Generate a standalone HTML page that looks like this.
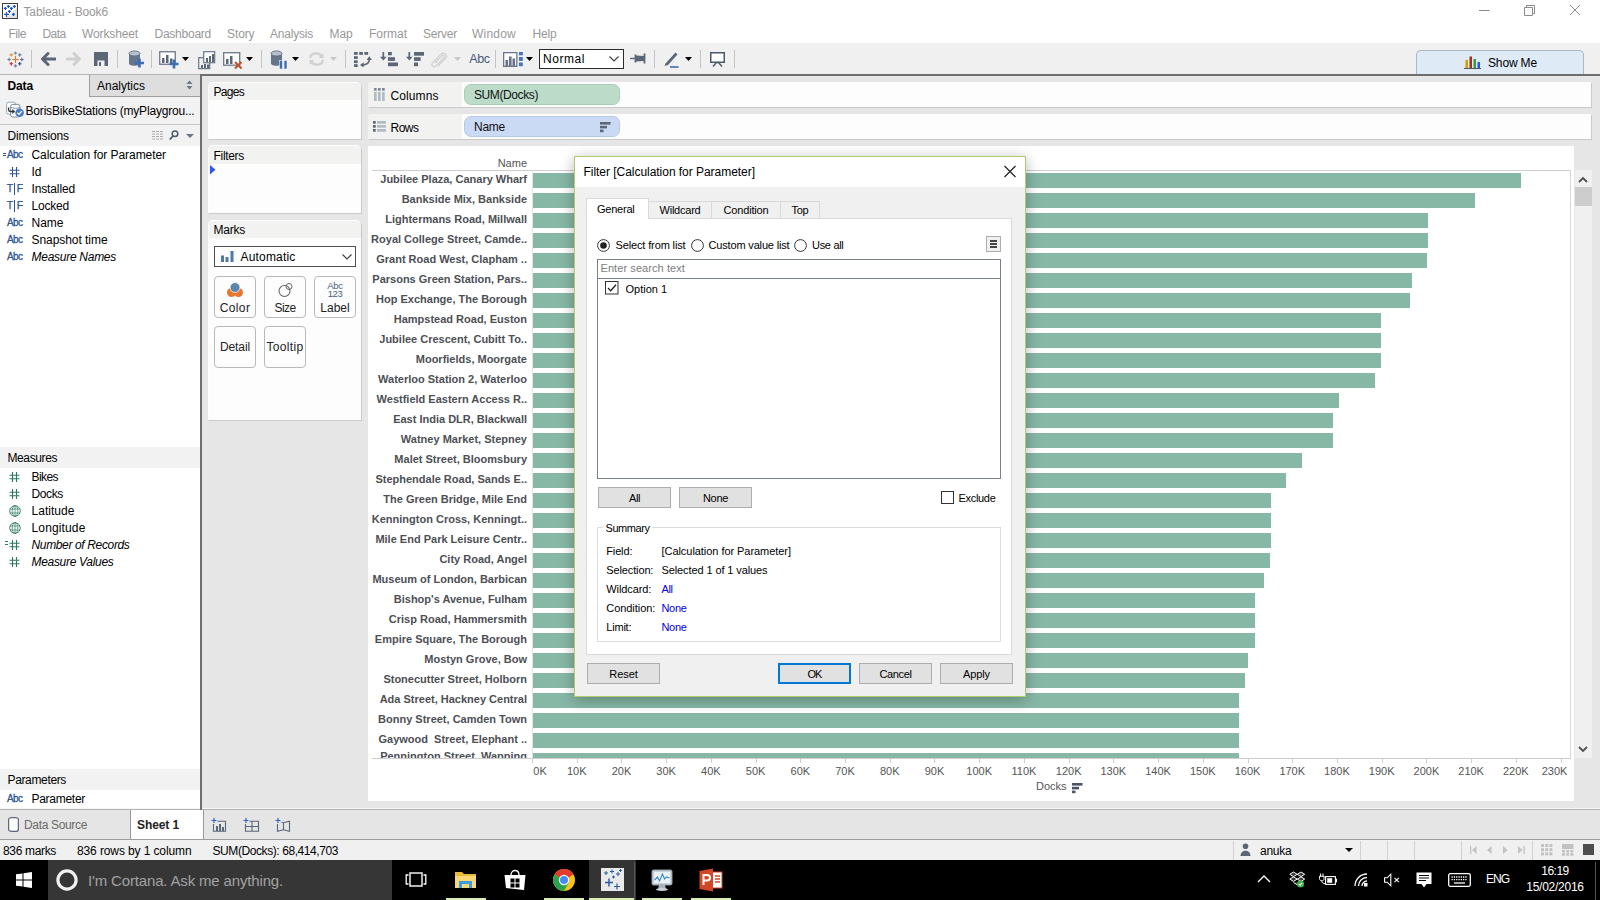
<!DOCTYPE html>
<html lang="en"><head><meta charset="utf-8"><title>Tableau - Book6</title><style>
html,body{margin:0;padding:0;}
body{width:1600px;height:900px;position:relative;overflow:hidden;background:#fff;font-family:'Liberation Sans',sans-serif;}
div,span,svg{position:absolute;box-sizing:border-box;}
span{white-space:pre;}
</style></head><body>
<svg style="left:2px;top:3px;" width="16" height="16" viewBox="0 0 16 16"><rect x="0.500" y="0.500" width="15" height="15" fill="#fff" stroke="#3c3c3c"/><path d="M15 5v10h-12z" fill="#e4e4e4"/><g stroke="#1a56b8" stroke-width="1.200"><path d="M1.900 5.400h3M3.400 3.900v3M4.900 3.400h3M6.400 1.900v3M7.900 5.400h3M9.400 3.900v3M10.900 3.400h3M12.400 1.900v3M5.900 8.400h3M7.400 6.900v3M2 11.400h5M4.500 9v5M10 11.400h3M11.500 9.900v3"/></g></svg>
<span style="left:23.50px;top:5.84px;font-size:12px;line-height:12px;color:#989898;letter-spacing:-0.149px;">Tableau - Book6</span>
<svg style="left:1476px;top:2px;" width="110" height="18" viewBox="0 0 110 18"><g stroke="#8a8a8a" stroke-width="1" fill="none"><path d="M3 8.5h10.5"/><path d="M48.5 5.5h8v8h-8z"/><path d="M50.5 5.5v-2h8v8h-2"/><path d="M94 3l10 10M104 3l-10 10"/></g></svg>
<span style="left:8.50px;top:28.14px;font-size:12px;line-height:12px;color:#989898;letter-spacing:-0.461px;">File</span>
<span style="left:42.50px;top:28.14px;font-size:12px;line-height:12px;color:#989898;letter-spacing:-0.590px;">Data</span>
<span style="left:82.00px;top:28.14px;font-size:12px;line-height:12px;color:#989898;letter-spacing:-0.127px;">Worksheet</span>
<span style="left:154.50px;top:28.14px;font-size:12px;line-height:12px;color:#989898;letter-spacing:-0.247px;">Dashboard</span>
<span style="left:227.00px;top:28.14px;font-size:12px;line-height:12px;color:#989898;letter-spacing:-0.103px;">Story</span>
<span style="left:270.00px;top:28.14px;font-size:12px;line-height:12px;color:#989898;letter-spacing:-0.211px;">Analysis</span>
<span style="left:329.50px;top:28.14px;font-size:12px;line-height:12px;color:#989898;letter-spacing:-0.115px;">Map</span>
<span style="left:369.00px;top:28.14px;font-size:12px;line-height:12px;color:#989898;">Format</span>
<span style="left:423.00px;top:28.14px;font-size:12px;line-height:12px;color:#989898;letter-spacing:-0.224px;">Server</span>
<span style="left:472.00px;top:28.14px;font-size:12px;line-height:12px;color:#989898;letter-spacing:0.219px;">Window</span>
<span style="left:532.50px;top:28.14px;font-size:12px;line-height:12px;color:#989898;letter-spacing:-0.172px;">Help</span>
<div style="left:0px;top:43px;width:1600px;height:32px;background:#f0f0f0;"></div>
<div style="left:0px;top:74px;width:200px;height:1px;background:#b2b2b2;"></div>
<div style="left:200px;top:74px;width:1400px;height:2px;background:#6e6e6e;"></div>
<div style="left:31px;top:50px;width:1px;height:18px;background:#c4c4c4;"></div>
<div style="left:117px;top:50px;width:1px;height:18px;background:#c4c4c4;"></div>
<div style="left:151px;top:50px;width:1px;height:18px;background:#c4c4c4;"></div>
<div style="left:261px;top:50px;width:1px;height:18px;background:#c4c4c4;"></div>
<div style="left:345px;top:50px;width:1px;height:18px;background:#c4c4c4;"></div>
<div style="left:495px;top:50px;width:1px;height:18px;background:#c4c4c4;"></div>
<div style="left:654px;top:50px;width:1px;height:18px;background:#c4c4c4;"></div>
<div style="left:700px;top:50px;width:1px;height:18px;background:#c4c4c4;"></div>
<div style="left:734px;top:50px;width:1px;height:18px;background:#c4c4c4;"></div>
<svg style="left:7px;top:50.5px;" width="17" height="17" viewBox="0 0 20 20"><g stroke-width="1.3" fill="none"><path d="M10 6v8M6 10h8" stroke="#e8762d" stroke-width="1.4"/><path d="M10 0.5v4M8 2.5h4" stroke="#7099a6"/><path d="M10 15.5v4M8 17.5h4" stroke="#7b7fa8"/><path d="M2.5 8v4M0.5 10h4" stroke="#5b879b"/><path d="M17.5 8v4M15.5 10h4" stroke="#5c6692"/><path d="M5 2.5v4M3 4.5h4" stroke="#eb9129"/><path d="M15 2.5v4M13 4.5h4" stroke="#59879b"/><path d="M5 13v4M3 15h4" stroke="#c72035"/><path d="M15 13v4M13 15h4" stroke="#1f447e"/></g></svg>
<svg style="left:40px;top:51px;" width="16" height="16" viewBox="0 0 16 16"><path d="M15 8H3.5M8 2.5L2.5 8l5.5 5.5" stroke="#5b6677" stroke-width="3" fill="none" stroke-linecap="round" stroke-linejoin="round"/></svg>
<svg style="left:66px;top:51px;" width="16" height="16" viewBox="0 0 16 16"><path d="M1 8h11.5M8 2.5L13.500 8l-5.5 5.5" stroke="#cfcfcf" stroke-width="3" fill="none" stroke-linecap="round" stroke-linejoin="round"/></svg>
<svg style="left:94px;top:52px;" width="14" height="14" viewBox="0 0 14 14"><rect x="0" y="0" width="14" height="14" fill="#5b6677"/><rect x="3.5" y="8.5" width="7" height="5.5" fill="#f0f0f0"/><rect x="5" y="10" width="2" height="4" fill="#5b6677"/></svg>
<svg style="left:128px;top:50px;" width="18" height="20" viewBox="0 0 18 20"><path d="M1 3.5v10c0 3 11 3 11 0v-10" fill="#66758a"/><ellipse cx="6.500" cy="3.500" rx="5.500" ry="2.500" fill="#b8c0cc" stroke="#66758a"/><path d="M11.500 8.500v9M7 13h9" stroke="#3e6db5" stroke-width="2.6"/></svg>
<svg style="left:159px;top:50px;" width="20" height="20" viewBox="0 0 20 20"><rect x="0.750" y="1.750" width="15.500" height="12.500" fill="#fff" stroke="#6b778a" stroke-width="1.3"/><rect x="3" y="8" width="2.500" height="5" fill="#5b6677"/><rect x="7" y="5" width="2.500" height="8" fill="#5b6677"/><rect x="11" y="8.500" width="2.500" height="4.500" fill="#5b6677"/><path d="M15 9.500v9M10.500 14h9" stroke="#3e6db5" stroke-width="2.600"/></svg>
<svg style="left:182px;top:57px;" width="7" height="4" viewBox="0 0 7 4"><path d="M0 0h7l-3.5 4z" fill="#000"/></svg>
<svg style="left:198px;top:50px;" width="20" height="20" viewBox="0 0 20 20"><rect x="5.700" y="1.700" width="11" height="11" fill="#fff" stroke="#6b778a" stroke-width="1.2"/><rect x="8" y="8" width="2" height="4" fill="#5b6677"/><rect x="11" y="6" width="2" height="6" fill="#5b6677"/><rect x="14" y="4" width="2" height="8" fill="#5b6677"/><path d="M5.500 7.600h-4.800v11h11v-5.500" fill="none" stroke="#6b778a" stroke-width="1.2"/><rect x="3" y="15" width="2" height="3" fill="#5b6677"/><rect x="6" y="14" width="2" height="4" fill="#5b6677"/><rect x="9" y="14.500" width="2" height="3.500" fill="#5b6677"/></svg>
<svg style="left:223px;top:50px;" width="20" height="20" viewBox="0 0 20 20"><rect x="0.700" y="2.700" width="16" height="12.500" fill="#fff" stroke="#6b778a" stroke-width="1.3"/><rect x="3" y="9" width="2.500" height="5" fill="#5b6677"/><rect x="7" y="6" width="2.500" height="8" fill="#5b6677"/><path d="M12 12l6.500 6.500M18.500 12L12 18.500" stroke="#c0502a" stroke-width="2"/></svg>
<svg style="left:246px;top:57px;" width="7" height="4" viewBox="0 0 7 4"><path d="M0 0h7l-3.5 4z" fill="#000"/></svg>
<svg style="left:270px;top:50px;" width="18" height="20" viewBox="0 0 18 20"><path d="M1 3.500v10c0 3 11 3 11 0v-10" fill="#66758a"/><ellipse cx="6.500" cy="3.500" rx="5.500" ry="2.500" fill="#b8c0cc" stroke="#66758a"/><rect x="9.500" y="10.500" width="3" height="8.500" fill="#3e6db5" stroke="#f0f0f0" stroke-width="0.600"/><rect x="14" y="10.500" width="3" height="8.500" fill="#3e6db5" stroke="#f0f0f0" stroke-width="0.600"/></svg>
<svg style="left:292px;top:57px;" width="7" height="4" viewBox="0 0 7 4"><path d="M0 0h7l-3.5 4z" fill="#000"/></svg>
<svg style="left:308px;top:51px;" width="17" height="16" viewBox="0 0 17 16"><g fill="none" stroke="#d0d0d0" stroke-width="2.200"><path d="M2 7c1-6 10-6 12-1"/><path d="M15 9c-1 6-10 6-12 1"/></g><path d="M15.500 2v5h-5z" fill="#d0d0d0"/><path d="M1.500 14v-5h5z" fill="#d0d0d0"/></svg>
<svg style="left:330px;top:57px;" width="7" height="4" viewBox="0 0 7 4"><path d="M0 0h7l-3.5 4z" fill="#c8c8c8"/></svg>
<svg style="left:354px;top:52px;" width="18" height="15" viewBox="0 0 18 15"><g fill="#5b6677"><rect x="0" y="0" width="3.700" height="2.800"/><rect x="5.200" y="0" width="3.700" height="2.800"/><rect x="10.400" y="0" width="3.700" height="2.800"/><rect x="0" y="4.200" width="3.700" height="2.800"/><rect x="0" y="8.300" width="3.700" height="2.800"/><rect x="0" y="12.200" width="3.700" height="2.800"/></g><path d="M8 13c5.500 0 7.300-2 7.300-6" fill="none" stroke="#5b6677" stroke-width="1.600"/><path d="M12.600 8l2.700-3.800 2.700 3.800z" fill="#5b6677"/><path d="M9.700 10.300l-3.700 2.700 3.700 2.700z" fill="#5b6677"/></svg>
<svg style="left:380px;top:52px;" width="18" height="15" viewBox="0 0 18 15"><path d="M3.300 0v7" stroke="#5b6677" stroke-width="1.700"/><path d="M0 4.800h6.600l-3.300 3.700z" fill="#5b6677"/><g fill="#5b6677"><rect x="8" y="0" width="3.800" height="3.300"/><rect x="8" y="5.200" width="7" height="3.700"/><rect x="8" y="10.500" width="10" height="3.700"/></g></svg>
<svg style="left:406px;top:52px;" width="18" height="15" viewBox="0 0 18 15"><path d="M3.300 0v7" stroke="#5b6677" stroke-width="1.700"/><path d="M0 4.800h6.600l-3.300 3.700z" fill="#5b6677"/><g fill="#5b6677"><rect x="8" y="0" width="10" height="3.700"/><rect x="8" y="5.200" width="6.600" height="3.700"/><rect x="8" y="10.500" width="4" height="3.700"/></g></svg>
<svg style="left:430px;top:51px;" width="18" height="17" viewBox="0 0 18 17"><path d="M5 12l7-7.300c1.300-1.300 3.200 0.500 1.900 1.900l-8 8.300c-2.300 2.300-5.500-0.800-3.200-3.200l8.300-8.500c3-3 7.300 1.200 4.300 4.300l-7.600 7.800" fill="none" stroke="#cfcfcf" stroke-width="1.200"/></svg>
<svg style="left:454px;top:57px;" width="7" height="4" viewBox="0 0 7 4"><path d="M0 0h7l-3.5 4z" fill="#c8c8c8"/></svg>
<span style="left:469.30px;top:53.12px;font-size:12.5px;line-height:12.5px;color:#4a5a78;letter-spacing:-0.416px;">Abc</span>
<svg style="left:503px;top:52px;" width="20" height="15" viewBox="0 0 20 15"><rect x="0.650" y="0.650" width="13.200" height="13.700" fill="#fff" stroke="#6b778a" stroke-width="1.300"/><rect x="2.500" y="8" width="2.600" height="6" fill="#66738a"/><rect x="6" y="4.500" width="2.600" height="9.500" fill="#66738a"/><rect x="9.500" y="6.500" width="2.600" height="7.500" fill="#66738a"/><rect x="16" y="0" width="3.800" height="3.300" fill="#4472c4"/><rect x="16" y="5" width="3.800" height="3.900" fill="#4472c4"/><rect x="16" y="10.500" width="3.800" height="3.700" fill="#4472c4"/></svg>
<svg style="left:526px;top:57px;" width="7" height="4" viewBox="0 0 7 4"><path d="M0 0h7l-3.5 4z" fill="#000"/></svg>
<div style="left:539px;top:49px;width:85px;height:20px;background:#fff;border:1px solid #2b2b2b;"></div>
<span style="left:543.00px;top:52.84px;font-size:12px;line-height:12px;color:#000;letter-spacing:0.555px;">Normal</span>
<svg style="left:609px;top:56px;" width="10" height="6" viewBox="0 0 10 6"><path d="M0.500 0.500l4.500 4.500 4.500-4.500" fill="none" stroke="#444" stroke-width="1.200"/></svg>
<svg style="left:630px;top:53px;" width="16" height="11" viewBox="0 0 16 11"><path d="M0 5.500h6" stroke="#5b6677" stroke-width="1.400"/><path d="M5.500 1.500v8M14.500 0.500v10" stroke="#5b6677" stroke-width="1.800"/><path d="M6 2.500l8 0.500v5l-8 0.500z" fill="#5b6677"/></svg>
<svg style="left:663px;top:51px;" width="17" height="17" viewBox="0 0 17 17"><path d="M2.500 12.500l10-11 2 2-9.500 10.500-3.500 1z" fill="#5b6677"/><path d="M7 16h8.500" stroke="#3e6db5" stroke-width="1.600"/></svg>
<svg style="left:685px;top:57px;" width="7" height="4" viewBox="0 0 7 4"><path d="M0 0h7l-3.5 4z" fill="#000"/></svg>
<svg style="left:710px;top:52px;" width="15" height="15" viewBox="0 0 15 15"><rect x="0.750" y="0.750" width="13.500" height="9.500" fill="#fff" stroke="#4d596b" stroke-width="1.500"/><path d="M3 14.500l3.500-4h2l3.500 4" fill="none" stroke="#4d596b" stroke-width="1.400"/></svg>
<div style="left:1416px;top:50px;width:168px;height:24px;background:#deeaf6;border:1px solid #a9b6c4;border-bottom:none;border-radius:5px 5px 0 0;"></div>
<svg style="left:1464px;top:56px;" width="17" height="13" viewBox="0 0 17 13"><rect x="1.500" y="4" width="2.500" height="8" fill="#c8a000"/><rect x="5.500" y="0.500" width="2.500" height="11.500" fill="#a03020"/><rect x="9.500" y="3" width="2.500" height="9" fill="#30a040"/><rect x="13.500" y="6" width="2.500" height="6" fill="#3050f0"/><path d="M0 12.500h17" stroke="#555" stroke-width="1"/></svg>
<span style="left:1488.00px;top:56.84px;font-size:12px;line-height:12px;color:#000;letter-spacing:-0.147px;">Show Me</span>
<div style="left:202px;top:76px;width:1398px;height:734px;background:#e6e6e6;"></div>
<div style="left:0px;top:75px;width:200px;height:22px;background:#f2f2f2;"></div>
<div style="left:89px;top:75px;width:111px;height:22px;background:#dedede;border-left:1px solid #9e9e9e;border-bottom:1px solid #9e9e9e;"></div>
<span style="left:7.50px;top:80.14px;font-size:12px;line-height:12px;color:#000;font-weight:bold;letter-spacing:-0.129px;">Data</span>
<span style="left:97.00px;top:80.14px;font-size:12px;line-height:12px;color:#000;">Analytics</span>
<svg style="left:186px;top:80px;" width="7" height="10" viewBox="0 0 7 10"><path d="M0.500 4l3-3.500 3 3.500z" fill="#6b7686"/><path d="M0.500 6l3 3.500 3-3.500z" fill="#6b7686"/></svg>
<div style="left:0px;top:97px;width:200px;height:27px;background:#f2f2f2;"></div>
<svg style="left:6px;top:101px;" width="19" height="17" viewBox="0 0 19 17"><rect x="0.600" y="1.200" width="9" height="12" rx="2" fill="#fdfdfd" stroke="#9aa5b4" stroke-width="1"/><rect x="4.600" y="3.400" width="9.400" height="12.600" rx="2.200" fill="#fdfdfd" stroke="#7f8b9c" stroke-width="1"/><path d="M5 6.300c2 1.300 7 1.300 8.800 0" fill="none" stroke="#7f8b9c" stroke-width="0.900"/><path d="M2.600 6.500v2.300c0 1.200 0.500 1.700 1.700 1.700h4" fill="none" stroke="#333" stroke-width="1.300"/><path d="M6.300 8l2.700 2.500-2.700 2.500z" fill="#333"/><circle cx="13.600" cy="11.700" r="4.300" fill="#4a7cc4"/><path d="M11.400 11.800l1.600 1.600 2.800-3.300" stroke="#fff" stroke-width="1.300" fill="none"/></svg>
<span style="left:25.50px;top:104.64px;font-size:12px;line-height:12px;color:#000;letter-spacing:-0.179px;">BorisBikeStations (myPlaygrou...</span>
<div style="left:0px;top:124px;width:200px;height:1px;background:#c6c6c6;"></div>
<div style="left:0px;top:125px;width:200px;height:21px;background:#f2f2f2;"></div>
<span style="left:7.50px;top:130.14px;font-size:12px;line-height:12px;color:#000;letter-spacing:-0.120px;">Dimensions</span>
<svg style="left:152px;top:131px;" width="12" height="9" viewBox="0 0 12 9"><g stroke="#aaa" stroke-width="1" stroke-dasharray="3 1"><path d="M0 0.500h12M0 3h12M0 5.500h12M0 8h12"/></g></svg>
<svg style="left:169px;top:130px;" width="10" height="10" viewBox="0 0 10 10"><circle cx="6" cy="3.800" r="2.800" fill="none" stroke="#4d5868" stroke-width="1.500"/><path d="M4 6l-3.200 3.500" stroke="#4d5868" stroke-width="1.800"/></svg>
<svg style="left:186px;top:134px;" width="8" height="4" viewBox="0 0 8 4"><path d="M0 0h8l-4 4z" fill="#6b7686"/></svg>
<span style="left:31.50px;top:149.14px;font-size:12px;line-height:12px;color:#000;letter-spacing:-0.062px;">Calculation for Parameter</span>
<span style="left:7.00px;top:149.53px;font-size:10px;line-height:10px;color:#2f5597;letter-spacing:-0.578px;-webkit-text-stroke:0.300px #2f5597;">Abc</span>
<div style="left:2.7px;top:153px;width:3.5px;height:1px;background:#2f5597;"></div>
<div style="left:2.7px;top:155px;width:3.5px;height:1px;background:#2f5597;"></div>
<span style="left:31.50px;top:166.14px;font-size:12px;line-height:12px;color:#000;letter-spacing:-0.008px;">Id</span>
<svg style="left:8.5px;top:166.5px;" width="11" height="10" viewBox="0 0 11 10"><g stroke="#2f5597" stroke-width="1.100"><path d="M3.500 0v10M7.500 0v10M0.500 3.300h10M0.500 6.800h10"/></g></svg>
<span style="left:31.50px;top:183.14px;font-size:12px;line-height:12px;color:#000;letter-spacing:-0.134px;">Installed</span>
<span style="left:6.80px;top:183.11px;font-size:10.5px;line-height:10.5px;color:#2f5597;-webkit-text-stroke:0.250px #2f5597;">T</span>
<div style="left:13.5px;top:183px;width:1px;height:12px;background:#2f5597;"></div>
<span style="left:16.80px;top:183.11px;font-size:10.5px;line-height:10.5px;color:#2f5597;-webkit-text-stroke:0.250px #2f5597;">F</span>
<span style="left:31.50px;top:200.14px;font-size:12px;line-height:12px;color:#000;letter-spacing:-0.201px;">Locked</span>
<span style="left:6.80px;top:200.11px;font-size:10.5px;line-height:10.5px;color:#2f5597;-webkit-text-stroke:0.250px #2f5597;">T</span>
<div style="left:13.5px;top:200px;width:1px;height:12px;background:#2f5597;"></div>
<span style="left:16.80px;top:200.11px;font-size:10.5px;line-height:10.5px;color:#2f5597;-webkit-text-stroke:0.250px #2f5597;">F</span>
<span style="left:31.50px;top:217.14px;font-size:12px;line-height:12px;color:#000;">Name</span>
<span style="left:7.00px;top:217.53px;font-size:10px;line-height:10px;color:#2f5597;letter-spacing:-0.578px;-webkit-text-stroke:0.300px #2f5597;">Abc</span>
<span style="left:31.50px;top:234.14px;font-size:12px;line-height:12px;color:#000;letter-spacing:-0.055px;">Snapshot time</span>
<span style="left:7.00px;top:234.53px;font-size:10px;line-height:10px;color:#2f5597;letter-spacing:-0.578px;-webkit-text-stroke:0.300px #2f5597;">Abc</span>
<span style="left:31.50px;top:251.14px;font-size:12px;line-height:12px;color:#000;font-style:italic;letter-spacing:-0.272px;">Measure Names</span>
<span style="left:7.00px;top:251.53px;font-size:10px;line-height:10px;color:#2f5597;letter-spacing:-0.578px;-webkit-text-stroke:0.300px #2f5597;">Abc</span>
<div style="left:0px;top:447px;width:200px;height:21px;background:#f2f2f2;"></div>
<span style="left:7.50px;top:452.14px;font-size:12px;line-height:12px;color:#000;letter-spacing:-0.398px;">Measures</span>
<span style="left:31.50px;top:471.14px;font-size:12px;line-height:12px;color:#000;letter-spacing:-0.569px;">Bikes</span>
<svg style="left:8.5px;top:471.5px;" width="11" height="10" viewBox="0 0 11 10"><g stroke="#2c7a5c" stroke-width="1.100"><path d="M3.500 0v10M7.500 0v10M0.500 3.300h10M0.500 6.800h10"/></g></svg>
<span style="left:31.50px;top:488.14px;font-size:12px;line-height:12px;color:#000;letter-spacing:-0.369px;">Docks</span>
<svg style="left:8.5px;top:488.5px;" width="11" height="10" viewBox="0 0 11 10"><g stroke="#2c7a5c" stroke-width="1.100"><path d="M3.500 0v10M7.500 0v10M0.500 3.300h10M0.500 6.800h10"/></g></svg>
<span style="left:31.50px;top:505.14px;font-size:12px;line-height:12px;color:#000;letter-spacing:0.037px;">Latitude</span>
<svg style="left:8.5px;top:505.0px;" width="12" height="12" viewBox="0 0 12 12"><g fill="none" stroke="#2c7a5c" stroke-width="0.900"><circle cx="6" cy="6" r="5.300"/><ellipse cx="6" cy="6" rx="2.800" ry="5.300" stroke-width="0.700"/><path d="M6 0.700v10.600M1.200 4h9.600M1.200 8h9.600" stroke-width="0.700"/></g></svg>
<span style="left:31.50px;top:522.14px;font-size:12px;line-height:12px;color:#000;letter-spacing:0.142px;">Longitude</span>
<svg style="left:8.5px;top:522.0px;" width="12" height="12" viewBox="0 0 12 12"><g fill="none" stroke="#2c7a5c" stroke-width="0.900"><circle cx="6" cy="6" r="5.300"/><ellipse cx="6" cy="6" rx="2.800" ry="5.300" stroke-width="0.700"/><path d="M6 0.700v10.600M1.200 4h9.600M1.200 8h9.600" stroke-width="0.700"/></g></svg>
<span style="left:31.50px;top:539.14px;font-size:12px;line-height:12px;color:#000;font-style:italic;letter-spacing:-0.356px;">Number of Records</span>
<svg style="left:8.5px;top:539.5px;" width="11" height="10" viewBox="0 0 11 10"><g stroke="#2c7a5c" stroke-width="1.100"><path d="M3.500 0v10M7.500 0v10M0.500 3.300h10M0.500 6.800h10"/></g></svg>
<div style="left:5px;top:541px;width:3px;height:1px;background:#2c7a5c;"></div>
<div style="left:5px;top:544px;width:3px;height:1px;background:#2c7a5c;"></div>
<span style="left:31.50px;top:556.14px;font-size:12px;line-height:12px;color:#000;font-style:italic;letter-spacing:-0.306px;">Measure Values</span>
<svg style="left:8.5px;top:556.5px;" width="11" height="10" viewBox="0 0 11 10"><g stroke="#2c7a5c" stroke-width="1.100"><path d="M3.500 0v10M7.500 0v10M0.500 3.300h10M0.500 6.800h10"/></g></svg>
<div style="left:0px;top:769px;width:200px;height:21px;background:#f2f2f2;"></div>
<span style="left:7.50px;top:774.14px;font-size:12px;line-height:12px;color:#000;letter-spacing:-0.353px;">Parameters</span>
<span style="left:7.00px;top:794.03px;font-size:10px;line-height:10px;color:#2f5597;letter-spacing:-0.578px;-webkit-text-stroke:0.300px #2f5597;">Abc</span>
<span style="left:31.50px;top:793.14px;font-size:12px;line-height:12px;color:#000;letter-spacing:-0.281px;">Parameter</span>
<div style="left:200px;top:75px;width:2px;height:735px;background:#707070;"></div>
<div style="left:208px;top:82px;width:153px;height:57px;background:#fdfdfd;border-radius:5px 5px 0 0;box-shadow:1px 1px 0 #c9c9c9;overflow:hidden;border-top:1px solid #fff;border-left:1px solid #fff;"><div style="left:0;top:0;width:153px;height:17px;background:#f2f2f1"></div></div>
<span style="left:213.50px;top:85.84px;font-size:12px;line-height:12px;color:#000;letter-spacing:-0.706px;">Pages</span>
<div style="left:208px;top:145px;width:153px;height:68px;background:#fdfdfd;border-radius:5px 5px 0 0;box-shadow:1px 1px 0 #c9c9c9;overflow:hidden;border-top:1px solid #fff;border-left:1px solid #fff;"><div style="left:0;top:0;width:153px;height:18px;background:#f2f2f1"></div></div>
<span style="left:213.50px;top:149.59px;font-size:12px;line-height:12px;color:#000;letter-spacing:-0.310px;">Filters</span>
<svg style="left:210px;top:165px;" width="6" height="10" viewBox="0 0 6 10"><path d="M0 0l5.500 4.700-5.500 4.700z" fill="#2f55f5"/></svg>
<div style="left:208px;top:220px;width:153px;height:200px;background:#fdfdfd;border-radius:5px 5px 0 0;box-shadow:1px 1px 0 #c9c9c9;overflow:hidden;border-top:1px solid #fff;border-left:1px solid #fff;"><div style="left:0;top:0;width:153px;height:17px;background:#f2f2f1"></div></div>
<span style="left:213.50px;top:223.84px;font-size:12px;line-height:12px;color:#000;letter-spacing:-0.234px;">Marks</span>
<div style="left:214px;top:246px;width:142px;height:21px;background:#fff;border:1px solid #4f4f4f;"></div>
<svg style="left:221px;top:251px;" width="13" height="11" viewBox="0 0 13 11"><rect x="0" y="4.500" width="3" height="6.500" fill="#4e79a7"/><rect x="4.500" y="6" width="3" height="5" fill="#4e79a7"/><rect x="9.500" y="0" width="3" height="11" fill="#4e79a7"/></svg>
<span style="left:240.50px;top:250.84px;font-size:12px;line-height:12px;color:#000;letter-spacing:0.182px;">Automatic</span>
<svg style="left:342px;top:254px;" width="10" height="6" viewBox="0 0 10 6"><path d="M0.500 0.500l4.500 4.500 4.500-4.500" fill="none" stroke="#444" stroke-width="1.200"/></svg>
<div style="left:214px;top:276px;width:42px;height:42px;background:#fdfdfd;border:1px solid #b9b9b9;border-radius:4px;"></div>
<span style="left:219.75px;top:301.84px;font-size:12px;line-height:12px;color:#222;letter-spacing:0.362px;">Color</span>
<div style="left:264px;top:276px;width:42px;height:42px;background:#fdfdfd;border:1px solid #b9b9b9;border-radius:4px;"></div>
<span style="left:274.50px;top:301.84px;font-size:12px;line-height:12px;color:#222;letter-spacing:-0.586px;">Size</span>
<div style="left:314px;top:276px;width:42px;height:42px;background:#fdfdfd;border:1px solid #b9b9b9;border-radius:4px;"></div>
<span style="left:320.25px;top:301.84px;font-size:12px;line-height:12px;color:#222;letter-spacing:0.025px;">Label</span>
<div style="left:214px;top:326px;width:42px;height:42px;background:#fdfdfd;border:1px solid #b9b9b9;border-radius:4px;"></div>
<span style="left:220.00px;top:341.34px;font-size:12px;line-height:12px;color:#222;letter-spacing:-0.115px;">Detail</span>
<div style="left:264px;top:326px;width:42px;height:42px;background:#fdfdfd;border:1px solid #b9b9b9;border-radius:4px;"></div>
<span style="left:266.50px;top:341.34px;font-size:12px;line-height:12px;color:#222;letter-spacing:0.330px;">Tooltip</span>
<svg style="left:226px;top:282px;" width="18" height="16" viewBox="0 0 18 16"><circle cx="5.500" cy="10.500" r="4.500" fill="#e8762d"/><circle cx="12.500" cy="10.500" r="4.500" fill="#e8762d"/><circle cx="9" cy="5.500" r="5" fill="#5b87ad" stroke="#fdfdfd" stroke-width="0.800"/></svg>
<svg style="left:278px;top:282px;" width="16" height="16" viewBox="0 0 16 16"><circle cx="6.500" cy="9" r="5.500" fill="none" stroke="#666" stroke-width="1.100"/><circle cx="11" cy="4.500" r="3" fill="none" stroke="#666" stroke-width="1"/></svg>
<span style="left:327.25px;top:281.46px;font-size:9.5px;line-height:9.5px;color:#4d5d78;letter-spacing:-0.292px;">Abc</span>
<span style="left:327.75px;top:289.46px;font-size:9.5px;line-height:9.5px;color:#4d5d78;letter-spacing:-0.453px;">123</span>
<div style="left:368px;top:82px;width:1223px;height:25px;background:#fdfdfd;border-radius:4px 0 0 0;box-shadow:1px 1px 0 #c9c9c9;overflow:hidden;"><div style="left:0;top:0;width:94px;height:25px;background:#f2f2f1"></div></div>
<span style="left:390.50px;top:89.84px;font-size:12px;line-height:12px;color:#000;letter-spacing:0.092px;">Columns</span>
<div style="left:368px;top:114px;width:1223px;height:25px;background:#fdfdfd;border-radius:4px 0 0 0;box-shadow:1px 1px 0 #c9c9c9;overflow:hidden;"><div style="left:0;top:0;width:94px;height:25px;background:#f2f2f1"></div></div>
<span style="left:390.50px;top:121.84px;font-size:12px;line-height:12px;color:#000;letter-spacing:-0.504px;">Rows</span>
<svg style="left:374px;top:88px;" width="11" height="13" viewBox="0 0 11 13"><g fill="#7d8797"><rect x="0" y="0" width="2.700" height="2.700"/><rect x="4" y="0" width="2.700" height="2.700"/><rect x="8" y="0" width="2.700" height="2.700"/></g><g fill="#b4bac4"><rect x="0" y="4" width="2.700" height="9"/><rect x="4" y="4" width="2.700" height="9"/><rect x="8" y="4" width="2.700" height="9"/></g></svg>
<svg style="left:373px;top:121px;" width="13" height="11" viewBox="0 0 13 11"><g fill="#5b6677"><rect x="0" y="0" width="2.700" height="2.700"/><rect x="0" y="4" width="2.700" height="2.700"/><rect x="0" y="8" width="2.700" height="2.700"/></g><g fill="#b4bac4"><rect x="4" y="0" width="9" height="2.700"/><rect x="4" y="4" width="9" height="2.700"/><rect x="4" y="8" width="9" height="2.700"/></g></svg>
<div style="left:464px;top:84px;width:156px;height:21px;background:#bcdcc9;border:1px solid #a9ceb7;border-radius:7px;"></div>
<span style="left:474.00px;top:88.84px;font-size:12px;line-height:12px;color:#111;letter-spacing:-0.400px;">SUM(Docks)</span>
<div style="left:464px;top:116px;width:156px;height:21px;background:#cbdaf4;border:1px solid #b6c9ea;border-radius:7px;"></div>
<span style="left:474.00px;top:120.84px;font-size:12px;line-height:12px;color:#111;letter-spacing:-0.254px;">Name</span>
<svg style="left:600px;top:122px;" width="11" height="11" viewBox="0 0 11 11"><g fill="#5b6677"><rect x="0" y="0" width="10.500" height="2.600"/><rect x="0" y="3.800" width="7" height="2.600"/><rect x="0" y="7.600" width="3.500" height="2.600"/></g></svg>
<div style="left:368px;top:146px;width:1206px;height:655px;background:#fff;"></div>
<div style="left:1575px;top:170px;width:17px;height:588px;background:#f0f0f0;"></div>
<div style="left:1575px;top:187px;width:17px;height:19px;background:#cdcdcd;"></div>
<svg style="left:1578px;top:176px;" width="10" height="7" viewBox="0 0 10 7"><path d="M1 6l4-4 4 4" fill="none" stroke="#505050" stroke-width="1.800"/></svg>
<svg style="left:1578px;top:746px;" width="10" height="7" viewBox="0 0 10 7"><path d="M1 1l4 4 4-4" fill="none" stroke="#505050" stroke-width="1.800"/></svg>
<span style="left:497.66px;top:157.99px;font-size:11px;line-height:11px;color:#555;">Name</span>
<div style="left:372px;top:170px;width:1199px;height:1px;background:#cdcdcd;"></div>
<div style="left:532px;top:170px;width:1px;height:589px;background:#e3e3e3;"></div>
<div style="left:1570px;top:170px;width:1px;height:589px;background:#d6d6d6;"></div>
<div style="left:368px;top:171px;width:1203px;height:587px;overflow:hidden">
<div style="left:165px;top:2px;width:988px;height:15px;background:#87b8a6"></div>
<span style="right:1044px;top:2.69px;font-size:11px;line-height:11px;font-weight:bold;color:#4d4f55">Jubilee Plaza, Canary Wharf</span>
<div style="left:165px;top:22px;width:942px;height:15px;background:#87b8a6"></div>
<span style="right:1044px;top:22.69px;font-size:11px;line-height:11px;font-weight:bold;color:#4d4f55">Bankside Mix, Bankside</span>
<div style="left:165px;top:42px;width:895px;height:15px;background:#87b8a6"></div>
<span style="right:1044px;top:42.69px;font-size:11px;line-height:11px;font-weight:bold;color:#4d4f55">Lightermans Road, Millwall</span>
<div style="left:165px;top:62px;width:895px;height:15px;background:#87b8a6"></div>
<span style="right:1044px;top:62.69px;font-size:11px;line-height:11px;font-weight:bold;color:#4d4f55">Royal College Street, Camde..</span>
<div style="left:165px;top:82px;width:894px;height:15px;background:#87b8a6"></div>
<span style="right:1044px;top:82.69px;font-size:11px;line-height:11px;font-weight:bold;color:#4d4f55">Grant Road West, Clapham ..</span>
<div style="left:165px;top:102px;width:879px;height:15px;background:#87b8a6"></div>
<span style="right:1044px;top:102.69px;font-size:11px;line-height:11px;font-weight:bold;color:#4d4f55">Parsons Green Station, Pars..</span>
<div style="left:165px;top:122px;width:877px;height:15px;background:#87b8a6"></div>
<span style="right:1044px;top:122.69px;font-size:11px;line-height:11px;font-weight:bold;color:#4d4f55">Hop Exchange, The Borough</span>
<div style="left:165px;top:142px;width:848px;height:15px;background:#87b8a6"></div>
<span style="right:1044px;top:142.69px;font-size:11px;line-height:11px;font-weight:bold;color:#4d4f55">Hampstead Road, Euston</span>
<div style="left:165px;top:162px;width:848px;height:15px;background:#87b8a6"></div>
<span style="right:1044px;top:162.69px;font-size:11px;line-height:11px;font-weight:bold;color:#4d4f55">Jubilee Crescent, Cubitt To..</span>
<div style="left:165px;top:182px;width:848px;height:15px;background:#87b8a6"></div>
<span style="right:1044px;top:182.69px;font-size:11px;line-height:11px;font-weight:bold;color:#4d4f55">Moorfields, Moorgate</span>
<div style="left:165px;top:202px;width:842px;height:15px;background:#87b8a6"></div>
<span style="right:1044px;top:202.69px;font-size:11px;line-height:11px;font-weight:bold;color:#4d4f55">Waterloo Station 2, Waterloo</span>
<div style="left:165px;top:222px;width:806px;height:15px;background:#87b8a6"></div>
<span style="right:1044px;top:222.69px;font-size:11px;line-height:11px;font-weight:bold;color:#4d4f55">Westfield Eastern Access R..</span>
<div style="left:165px;top:242px;width:800px;height:15px;background:#87b8a6"></div>
<span style="right:1044px;top:242.69px;font-size:11px;line-height:11px;font-weight:bold;color:#4d4f55">East India DLR, Blackwall</span>
<div style="left:165px;top:262px;width:800px;height:15px;background:#87b8a6"></div>
<span style="right:1044px;top:262.69px;font-size:11px;line-height:11px;font-weight:bold;color:#4d4f55">Watney Market, Stepney</span>
<div style="left:165px;top:282px;width:769px;height:15px;background:#87b8a6"></div>
<span style="right:1044px;top:282.69px;font-size:11px;line-height:11px;font-weight:bold;color:#4d4f55">Malet Street, Bloomsbury</span>
<div style="left:165px;top:302px;width:753px;height:15px;background:#87b8a6"></div>
<span style="right:1044px;top:302.69px;font-size:11px;line-height:11px;font-weight:bold;color:#4d4f55">Stephendale Road, Sands E..</span>
<div style="left:165px;top:322px;width:738px;height:15px;background:#87b8a6"></div>
<span style="right:1044px;top:322.69px;font-size:11px;line-height:11px;font-weight:bold;color:#4d4f55">The Green Bridge, Mile End</span>
<div style="left:165px;top:342px;width:738px;height:15px;background:#87b8a6"></div>
<span style="right:1044px;top:342.69px;font-size:11px;line-height:11px;font-weight:bold;color:#4d4f55">Kennington Cross, Kenningt..</span>
<div style="left:165px;top:362px;width:738px;height:15px;background:#87b8a6"></div>
<span style="right:1044px;top:362.69px;font-size:11px;line-height:11px;font-weight:bold;color:#4d4f55">Mile End Park Leisure Centr..</span>
<div style="left:165px;top:382px;width:737px;height:15px;background:#87b8a6"></div>
<span style="right:1044px;top:382.69px;font-size:11px;line-height:11px;font-weight:bold;color:#4d4f55">City Road, Angel</span>
<div style="left:165px;top:402px;width:731px;height:15px;background:#87b8a6"></div>
<span style="right:1044px;top:402.69px;font-size:11px;line-height:11px;font-weight:bold;color:#4d4f55">Museum of London, Barbican</span>
<div style="left:165px;top:422px;width:722px;height:15px;background:#87b8a6"></div>
<span style="right:1044px;top:422.69px;font-size:11px;line-height:11px;font-weight:bold;color:#4d4f55">Bishop&#x27;s Avenue, Fulham</span>
<div style="left:165px;top:442px;width:722px;height:15px;background:#87b8a6"></div>
<span style="right:1044px;top:442.69px;font-size:11px;line-height:11px;font-weight:bold;color:#4d4f55">Crisp Road, Hammersmith</span>
<div style="left:165px;top:462px;width:722px;height:15px;background:#87b8a6"></div>
<span style="right:1044px;top:462.69px;font-size:11px;line-height:11px;font-weight:bold;color:#4d4f55">Empire Square, The Borough</span>
<div style="left:165px;top:482px;width:715px;height:15px;background:#87b8a6"></div>
<span style="right:1044px;top:482.69px;font-size:11px;line-height:11px;font-weight:bold;color:#4d4f55">Mostyn Grove, Bow</span>
<div style="left:165px;top:502px;width:712px;height:15px;background:#87b8a6"></div>
<span style="right:1044px;top:502.69px;font-size:11px;line-height:11px;font-weight:bold;color:#4d4f55">Stonecutter Street, Holborn</span>
<div style="left:165px;top:522px;width:706px;height:15px;background:#87b8a6"></div>
<span style="right:1044px;top:522.69px;font-size:11px;line-height:11px;font-weight:bold;color:#4d4f55">Ada Street, Hackney Central</span>
<div style="left:165px;top:542px;width:706px;height:15px;background:#87b8a6"></div>
<span style="right:1044px;top:542.69px;font-size:11px;line-height:11px;font-weight:bold;color:#4d4f55">Bonny Street, Camden Town</span>
<div style="left:165px;top:562px;width:706px;height:15px;background:#87b8a6"></div>
<span style="right:1044px;top:562.69px;font-size:11px;line-height:11px;font-weight:bold;color:#4d4f55">Gaywood  Street, Elephant ..</span>
<div style="left:165px;top:582px;width:706px;height:15px;background:#87b8a6"></div>
<span style="right:1044px;top:579.69px;font-size:11px;line-height:11px;font-weight:bold;color:#4d4f55">Pennington Street, Wapping</span>
</div>
<div style="left:372px;top:758px;width:1199px;height:1px;background:#cdcdcd;"></div>
<div style="left:532px;top:759px;width:1px;height:4px;background:#cdcdcd;"></div>
<span style="left:533.27px;top:765.69px;font-size:11px;line-height:11px;color:#555;">0K</span>
<div style="left:577px;top:759px;width:1px;height:4px;background:#cdcdcd;"></div>
<span style="left:566.93px;top:765.69px;font-size:11px;line-height:11px;color:#555;">10K</span>
<div style="left:621px;top:759px;width:1px;height:4px;background:#cdcdcd;"></div>
<span style="left:611.65px;top:765.69px;font-size:11px;line-height:11px;color:#555;">20K</span>
<div style="left:666px;top:759px;width:1px;height:4px;background:#cdcdcd;"></div>
<span style="left:656.37px;top:765.69px;font-size:11px;line-height:11px;color:#555;">30K</span>
<div style="left:711px;top:759px;width:1px;height:4px;background:#cdcdcd;"></div>
<span style="left:701.09px;top:765.69px;font-size:11px;line-height:11px;color:#555;">40K</span>
<div style="left:756px;top:759px;width:1px;height:4px;background:#cdcdcd;"></div>
<span style="left:745.81px;top:765.69px;font-size:11px;line-height:11px;color:#555;">50K</span>
<div style="left:800px;top:759px;width:1px;height:4px;background:#cdcdcd;"></div>
<span style="left:790.53px;top:765.69px;font-size:11px;line-height:11px;color:#555;">60K</span>
<div style="left:845px;top:759px;width:1px;height:4px;background:#cdcdcd;"></div>
<span style="left:835.25px;top:765.69px;font-size:11px;line-height:11px;color:#555;">70K</span>
<div style="left:890px;top:759px;width:1px;height:4px;background:#cdcdcd;"></div>
<span style="left:879.97px;top:765.69px;font-size:11px;line-height:11px;color:#555;">80K</span>
<div style="left:934px;top:759px;width:1px;height:4px;background:#cdcdcd;"></div>
<span style="left:924.69px;top:765.69px;font-size:11px;line-height:11px;color:#555;">90K</span>
<div style="left:979px;top:759px;width:1px;height:4px;background:#cdcdcd;"></div>
<span style="left:966.35px;top:765.69px;font-size:11px;line-height:11px;color:#555;">100K</span>
<div style="left:1024px;top:759px;width:1px;height:4px;background:#cdcdcd;"></div>
<span style="left:1011.48px;top:765.69px;font-size:11px;line-height:11px;color:#555;">110K</span>
<div style="left:1069px;top:759px;width:1px;height:4px;background:#cdcdcd;"></div>
<span style="left:1055.79px;top:765.69px;font-size:11px;line-height:11px;color:#555;">120K</span>
<div style="left:1113px;top:759px;width:1px;height:4px;background:#cdcdcd;"></div>
<span style="left:1100.51px;top:765.69px;font-size:11px;line-height:11px;color:#555;">130K</span>
<div style="left:1158px;top:759px;width:1px;height:4px;background:#cdcdcd;"></div>
<span style="left:1145.23px;top:765.69px;font-size:11px;line-height:11px;color:#555;">140K</span>
<div style="left:1203px;top:759px;width:1px;height:4px;background:#cdcdcd;"></div>
<span style="left:1189.95px;top:765.69px;font-size:11px;line-height:11px;color:#555;">150K</span>
<div style="left:1248px;top:759px;width:1px;height:4px;background:#cdcdcd;"></div>
<span style="left:1234.67px;top:765.69px;font-size:11px;line-height:11px;color:#555;">160K</span>
<div style="left:1292px;top:759px;width:1px;height:4px;background:#cdcdcd;"></div>
<span style="left:1279.39px;top:765.69px;font-size:11px;line-height:11px;color:#555;">170K</span>
<div style="left:1337px;top:759px;width:1px;height:4px;background:#cdcdcd;"></div>
<span style="left:1324.11px;top:765.69px;font-size:11px;line-height:11px;color:#555;">180K</span>
<div style="left:1382px;top:759px;width:1px;height:4px;background:#cdcdcd;"></div>
<span style="left:1368.83px;top:765.69px;font-size:11px;line-height:11px;color:#555;">190K</span>
<div style="left:1426px;top:759px;width:1px;height:4px;background:#cdcdcd;"></div>
<span style="left:1413.55px;top:765.69px;font-size:11px;line-height:11px;color:#555;">200K</span>
<div style="left:1471px;top:759px;width:1px;height:4px;background:#cdcdcd;"></div>
<span style="left:1458.27px;top:765.69px;font-size:11px;line-height:11px;color:#555;">210K</span>
<div style="left:1516px;top:759px;width:1px;height:4px;background:#cdcdcd;"></div>
<span style="left:1502.99px;top:765.69px;font-size:11px;line-height:11px;color:#555;">220K</span>
<div style="left:1561px;top:759px;width:1px;height:4px;background:#cdcdcd;"></div>
<span style="left:1541.65px;top:765.69px;font-size:11px;line-height:11px;color:#555;">230K</span>
<span style="left:1036.00px;top:781.19px;font-size:11px;line-height:11px;color:#555;">Docks</span>
<svg style="left:1072px;top:783px;" width="11" height="11" viewBox="0 0 11 11"><g fill="#4b5568"><rect x="0" y="0" width="10.500" height="2.600"/><rect x="0" y="3.800" width="7" height="2.600"/><rect x="0" y="7.600" width="3.500" height="2.600"/></g></svg>
<div style="left:0px;top:808px;width:1600px;height:1px;background:#f6f6f6;"></div>
<div style="left:0px;top:809px;width:1600px;height:1px;background:#b2b2b2;"></div>
<div style="left:0px;top:810px;width:1600px;height:30px;background:#e5e5e5;"></div>
<div style="left:200px;top:808px;width:2px;height:2px;background:#707070;"></div>
<div style="left:130px;top:810px;width:1px;height:30px;background:#9a9a9a;"></div>
<div style="left:131px;top:810px;width:72px;height:30px;background:#fff;"></div>
<div style="left:203px;top:810px;width:1px;height:30px;background:#9a9a9a;"></div>
<svg style="left:8px;top:817px;" width="11" height="15" viewBox="0 0 11 15"><rect x="0.600" y="0.600" width="9.800" height="13.800" rx="3" ry="2" fill="#fdfdfd" stroke="#5b6677" stroke-width="1.200"/></svg>
<span style="left:24.00px;top:818.84px;font-size:12px;line-height:12px;color:#6a6a6a;letter-spacing:-0.337px;">Data Source</span>
<span style="left:137.00px;top:818.84px;font-size:12px;line-height:12px;color:#222;font-weight:bold;letter-spacing:-0.098px;">Sheet 1</span>
<svg style="left:211px;top:817px;" width="17" height="15" viewBox="0 0 17 15"><path d="M0.500 3.500h5M3 1v5" stroke="#2f6bbf" stroke-width="1.200"/><path d="M2.500 7v7.300h12v-10h-8" fill="none" stroke="#5b6677" stroke-width="1.100"/><rect x="5" y="9" width="2" height="5" fill="#5b6677"/><rect x="8" y="7" width="2" height="7" fill="#5b6677"/><rect x="11" y="10" width="2" height="4" fill="#5b6677"/></svg>
<svg style="left:243px;top:817px;" width="17" height="15" viewBox="0 0 17 15"><path d="M0.500 3.500h5M3 1v5" stroke="#2f6bbf" stroke-width="1.200"/><path d="M2.500 7v7.300h13v-10h-9M2.500 9.500h13M9 4.500v10" fill="none" stroke="#5b6677" stroke-width="1.100"/></svg>
<svg style="left:275px;top:817px;" width="17" height="15" viewBox="0 0 17 15"><path d="M0.500 3.500h5M3 1v5" stroke="#2f6bbf" stroke-width="1.200"/><path d="M2.500 7v7.300l6-1.500 6 1.500v-10l-6 1.500-2-0.500M8.500 5.800v7" fill="none" stroke="#5b6677" stroke-width="1.100"/></svg>
<div style="left:0px;top:839px;width:1600px;height:1px;background:#9c9c9c;"></div>
<div style="left:0px;top:840px;width:1600px;height:20px;background:#f0f0f0;"></div>
<span style="left:3.00px;top:844.84px;font-size:12px;line-height:12px;color:#000;letter-spacing:-0.337px;">836 marks</span>
<span style="left:77.00px;top:844.84px;font-size:12px;line-height:12px;color:#000;letter-spacing:-0.112px;">836 rows by 1 column</span>
<span style="left:212.50px;top:844.84px;font-size:12px;line-height:12px;color:#000;letter-spacing:-0.420px;">SUM(Docks): 68,414,703</span>
<div style="left:1233px;top:841px;width:1px;height:19px;background:#d0d0d0;"></div>
<div style="left:1360px;top:841px;width:1px;height:19px;background:#d0d0d0;"></div>
<div style="left:1387px;top:841px;width:1px;height:19px;background:#d0d0d0;"></div>
<div style="left:1414px;top:841px;width:1px;height:19px;background:#d0d0d0;"></div>
<div style="left:1461px;top:841px;width:1px;height:19px;background:#d0d0d0;"></div>
<div style="left:1532px;top:841px;width:1px;height:19px;background:#d0d0d0;"></div>
<svg style="left:1240px;top:843px;" width="11" height="13" viewBox="0 0 11 13"><circle cx="5.500" cy="3.200" r="2.800" fill="#5b6677"/><path d="M0.500 13c0-7 10-7 10 0z" fill="#5b6677"/></svg>
<span style="left:1260.00px;top:844.84px;font-size:12px;line-height:12px;color:#000;letter-spacing:-0.241px;">anuka</span>
<svg style="left:1345px;top:848px;" width="8" height="4" viewBox="0 0 8 4"><path d="M0 0h8l-4 4z" fill="#000"/></svg>
<svg style="left:1469px;top:845px;" width="60" height="10" viewBox="0 0 60 10"><g fill="#c2c2c2"><rect x="1" y="1" width="1.300" height="8"/><path d="M7.500 1v8l-4.500-4z"/><path d="M22.500 1v8l-4.500-4z"/><path d="M34 1v8l4.500-4z"/><path d="M49 1v8l4.500-4z"/><rect x="54.500" y="1" width="1.300" height="8"/></g></svg>
<svg style="left:1541px;top:844px;" width="12" height="12" viewBox="0 0 12 12"><g fill="#c2c2c2"><rect x="0" y="0" width="3" height="3"/><rect x="4.200" y="0" width="3" height="3"/><rect x="8.400" y="0" width="3" height="3"/><rect x="0" y="4.200" width="3" height="3"/><rect x="4.200" y="4.200" width="3" height="3"/><rect x="8.400" y="4.200" width="3" height="3"/><rect x="0" y="8.400" width="3" height="3"/><rect x="4.200" y="8.400" width="3" height="3"/><rect x="8.400" y="8.400" width="3" height="3"/></g></svg>
<svg style="left:1562px;top:844px;" width="12" height="12" viewBox="0 0 12 12"><g fill="#c2c2c2"><rect x="0" y="0" width="11.500" height="5"/><rect x="0" y="6" width="3" height="2.500"/><rect x="4.200" y="6" width="3" height="2.500"/><rect x="8.400" y="6" width="3" height="2.500"/><rect x="0" y="9.200" width="3" height="2.500"/><rect x="4.200" y="9.200" width="3" height="2.500"/><rect x="8.400" y="9.200" width="3" height="2.500"/></g></svg>
<div style="left:1583px;top:844px;width:11px;height:11px;background:#4d4d4d;"></div>
<div style="left:0px;top:860px;width:1600px;height:40px;background:#000;"></div>
<div style="left:48px;top:860px;width:344px;height:40px;background:#363636;"></div>
<svg style="left:16px;top:872px;" width="16" height="16" viewBox="0 0 16 16"><g fill="#fff"><path d="M0 2.300l6.500-0.900v6.100h-6.500z"/><path d="M7.500 1.300l8.500-1.300v7.500h-8.500z"/><path d="M0 8.500h6.500v6.100l-6.500-0.900z"/><path d="M7.500 8.500h8.500v7.500l-8.500-1.300z"/></g></svg>
<svg style="left:56px;top:869px;" width="22" height="22" viewBox="0 0 22 22"><circle cx="11" cy="11" r="9.100" fill="none" stroke="#f2f2f2" stroke-width="3.200"/></svg>
<span style="left:88.00px;top:872.80px;font-size:15px;line-height:15px;color:#a2a2a2;letter-spacing:-0.159px;">I&#x27;m Cortana. Ask me anything.</span>
<svg style="left:405px;top:872px;" width="22" height="16" viewBox="0 0 22 16"><rect x="5" y="1" width="12" height="13" fill="none" stroke="#fff" stroke-width="1.400"/><path d="M3.500 3h-2.300v9h2.300M18.500 3h2.300v9h-2.300" fill="none" stroke="#fff" stroke-width="1.300"/></svg>
<svg style="left:454px;top:870px;" width="24" height="20" viewBox="0 0 24 20"><path d="M1 2h7l2 2h12v14h-21z" fill="#e9b93a"/><path d="M1 6h21v12h-21z" fill="#f8d775"/><path d="M5 11h13v7h-13z" fill="#3e9be0"/><path d="M8 14h7v4h-7z" fill="#f8d775"/></svg>
<svg style="left:503px;top:868px;" width="24" height="24" viewBox="0 0 24 24"><path d="M8 7c0-6 8-6 8 0" fill="none" stroke="#fff" stroke-width="1.300"/><path d="M1.500 7h21l-1.500 15-18-2z" fill="#fff"/><g fill="#000"><rect x="7.500" y="10.500" width="4" height="4"/><rect x="12.500" y="10.500" width="4" height="4"/><rect x="7.500" y="15.500" width="4" height="4"/><rect x="12.500" y="15.500" width="4" height="4"/></g></svg>
<svg style="left:552px;top:868px;" width="24" height="24" viewBox="0 0 24 24"><circle cx="12" cy="12" r="11" fill="#fbc116"/><path d="M12 12L2.500 6.500a11 11 0 0 1 19 0z" fill="#e33b2e"/><path d="M12 12L2.500 6.500a11 11 0 0 0 9.500 16.500l4.500-8z" fill="#2ba24c"/><path d="M12 7h9.500" stroke="#e33b2e" stroke-width="0"/><circle cx="12" cy="12" r="5.200" fill="#fff"/><circle cx="12" cy="12" r="4" fill="#4a8af4"/></svg>
<div style="left:589px;top:860px;width:47px;height:40px;background:#333;"></div>
<svg style="left:601px;top:868px;" width="23" height="23" viewBox="0 0 23 23"><rect x="0" y="0" width="23" height="23" fill="#e9e9e9"/><g stroke="#2a5d9f" stroke-width="1.500"><path d="M4 14.500h8M8 10.500v8"/><path d="M13 18.500h6M16 15.500v6" stroke-width="1.200"/><path d="M3 5h4M5 3v4M9 3.500h4M11 1.500v4M15 6h4M17 4v4M11 9h3M12.500 7.500v3M18 2.500h3M19.500 1v3" stroke-width="1"/></g></svg>
<svg style="left:650px;top:868px;" width="24" height="24" viewBox="0 0 24 24"><rect x="2" y="2" width="20" height="15" rx="1.500" fill="#c9d3dc" stroke="#8c98a4"/><rect x="4" y="4" width="16" height="11" fill="#eaf2f8"/><path d="M4.500 12l3-3 2 4 3-7 2 5 2-2 3 1" fill="none" stroke="#3a8ad0" stroke-width="1.100"/><path d="M9 17h6l1 4h-8z" fill="#aab4be"/><ellipse cx="12" cy="21.500" rx="6" ry="1.500" fill="#c9d3dc"/></svg>
<svg style="left:699px;top:868px;" width="24" height="24" viewBox="0 0 24 24"><rect x="9" y="4" width="14" height="16" fill="#fff" stroke="#d24726"/><path d="M0.500 3l13.500-2.500v23l-13.500-2.500z" fill="#d24726"/><path d="M16 8h5M16 11h5M16 14h5" stroke="#d24726" stroke-width="1.500"/><path d="M4.500 17v-10h3.500c4 0 4 5.500 0 5.500h-3" fill="none" stroke="#fff" stroke-width="2"/></svg>
<div style="left:446px;top:898px;width:40px;height:2px;background:#d9efb0;"></div>
<div style="left:544px;top:898px;width:40px;height:2px;background:#d9efb0;"></div>
<div style="left:589px;top:898px;width:45px;height:2px;background:#d9efb0;"></div>
<div style="left:642px;top:898px;width:40px;height:2px;background:#d9efb0;"></div>
<div style="left:691px;top:898px;width:40px;height:2px;background:#d9efb0;"></div>
<div style="left:634px;top:862px;width:1px;height:38px;background:#555;"></div>
<svg style="left:1257px;top:875px;" width="14" height="8" viewBox="0 0 14 8"><path d="M1 7l6-6 6 6" fill="none" stroke="#fff" stroke-width="1.400"/></svg>
<svg style="left:1289px;top:871px;" width="17" height="17" viewBox="0 0 17 17"><g fill="#3a3a3a" stroke="#fff" stroke-width="1"><path d="M4.500 1l3.700 2.300-3.700 2.300-3.700-2.300zM12 1l3.700 2.300-3.700 2.300-3.700-2.300zM4.500 5.800l3.700 2.300-3.700 2.300-3.700-2.300zM12 5.800l3.700 2.300-3.700 2.300-3.700-2.300zM4.500 11.500l3.800 2.300 3.700-2.300"/></g><circle cx="11.500" cy="13" r="3.600" fill="#3cb043"/><path d="M9.800 13l1.300 1.300 2.200-2.600" stroke="#fff" stroke-width="1.100" fill="none"/></svg>
<svg style="left:1319px;top:873px;" width="18" height="14" viewBox="0 0 18 14"><rect x="6.600" y="3.600" width="9.800" height="7.800" fill="none" stroke="#fff" stroke-width="1.100"/><rect x="16.900" y="5.700" width="1.100" height="3.600" fill="#fff"/><rect x="8.200" y="5.200" width="5" height="4.600" fill="#fff"/><path d="M1.600 0.500v2.500M4 0.500v2.500" stroke="#fff" stroke-width="1"/><path d="M0.500 3.300h4.600v2.200c0 1.500-1 2.300-2.300 2.300s-2.300-0.800-2.300-2.300zM2.800 7.800c0 2.500 1.500 2.700 3.500 2.700" fill="none" stroke="#fff" stroke-width="1"/></svg>
<svg style="left:1354px;top:873px;" width="14" height="14" viewBox="0 0 14 14"><g fill="none" stroke="#fff" stroke-width="1.300"><path d="M1 13a12 12 0 0 1 12-12"/><path d="M4.500 13a8.500 8.500 0 0 1 8.500-8.500"/><path d="M8 13a5 5 0 0 1 5-5"/></g><rect x="10" y="10" width="3.500" height="3.500" fill="#fff"/></svg>
<svg style="left:1384px;top:873px;" width="17" height="14" viewBox="0 0 17 14"><path d="M0.600 4.800h2.600l3.600-3.600v11.600l-3.600-3.600h-2.600z" fill="none" stroke="#fff" stroke-width="1.100"/><path d="M10.500 4.800l4.400 4.400M14.900 4.800l-4.400 4.400" stroke="#fff" stroke-width="1.100"/></svg>
<svg style="left:1416px;top:872px;" width="16" height="17" viewBox="0 0 16 17"><path d="M0.500 0.500h15v11.500h-5l-2.500 3.500-2.500-3.500h-5z" fill="#fff"/><path d="M3 3.500h10M3 6h10M3 8.500h7" stroke="#000" stroke-width="1"/></svg>
<svg style="left:1448px;top:873px;" width="23" height="14" viewBox="0 0 23 14"><rect x="0.700" y="0.700" width="21.600" height="12.600" rx="1.500" fill="none" stroke="#fff" stroke-width="1.300"/><path d="M3.500 4h16M3.500 6.700h16" stroke="#fff" stroke-width="1.300" stroke-dasharray="1.300 1"/><path d="M6 10h11" stroke="#fff" stroke-width="1.300"/></svg>
<span style="left:1486.00px;top:873.34px;font-size:12px;line-height:12px;color:#fff;letter-spacing:-1.005px;">ENG</span>
<span style="left:1541.25px;top:864.84px;font-size:12px;line-height:12px;color:#fff;letter-spacing:-0.506px;">16:19</span>
<span style="left:1526.25px;top:881.34px;font-size:12px;line-height:12px;color:#fff;letter-spacing:-0.256px;">15/02/2016</span>
<div style="left:1595px;top:862px;width:1px;height:38px;background:#555;"></div>
<div style="left:574px;top:156px;width:452px;height:541px;background:#f0f0f0;border:1px solid #aecb6e;box-shadow:0 3px 14px rgba(0,0,0,.3);"></div>
<div style="left:575px;top:157px;width:450px;height:30px;background:#fff;"></div>
<span style="left:583.50px;top:165.84px;font-size:12px;line-height:12px;color:#000;letter-spacing:-0.036px;">Filter [Calculation for Parameter]</span>
<svg style="left:1003px;top:165px;" width="14" height="13" viewBox="0 0 14 13"><path d="M1.500 1l11 11M12.500 1l-11 11" stroke="#222" stroke-width="1.200"/></svg>
<div style="left:586px;top:218px;width:426px;height:437px;background:#fff;border:1px solid #d9d9d9;"></div>
<div style="left:648px;top:201px;width:64px;height:18px;background:#f0f0f0;border:1px solid #d9d9d9;"></div>
<span style="left:659.50px;top:204.69px;font-size:11px;line-height:11px;color:#000;letter-spacing:-0.225px;">Wildcard</span>
<div style="left:711px;top:201px;width:70px;height:18px;background:#f0f0f0;border:1px solid #d9d9d9;"></div>
<span style="left:723.50px;top:204.69px;font-size:11px;line-height:11px;color:#000;letter-spacing:-0.165px;">Condition</span>
<div style="left:780px;top:201px;width:40px;height:18px;background:#f0f0f0;border:1px solid #d9d9d9;"></div>
<span style="left:791.50px;top:204.69px;font-size:11px;line-height:11px;color:#000;letter-spacing:-0.250px;">Top</span>
<div style="left:586px;top:198px;width:63px;height:21px;background:#fff;border:1px solid #d9d9d9;border-bottom:none;"></div>
<span style="left:597.00px;top:203.69px;font-size:11px;line-height:11px;color:#000;letter-spacing:-0.234px;">General</span>
<svg style="left:597.0px;top:238.5px;" width="13" height="13" viewBox="0 0 13 13"><circle cx="6.500" cy="6.500" r="5.900" fill="#fff" stroke="#333" stroke-width="1"/><circle cx="6.500" cy="6.500" r="3.300" fill="#222"/></svg>
<svg style="left:690.5px;top:238.5px;" width="13" height="13" viewBox="0 0 13 13"><circle cx="6.500" cy="6.500" r="5.900" fill="#fff" stroke="#333" stroke-width="1"/></svg>
<svg style="left:794.0px;top:238.5px;" width="13" height="13" viewBox="0 0 13 13"><circle cx="6.500" cy="6.500" r="5.900" fill="#fff" stroke="#333" stroke-width="1"/></svg>
<span style="left:615.50px;top:239.69px;font-size:11px;line-height:11px;color:#000;letter-spacing:-0.134px;">Select from list</span>
<span style="left:708.50px;top:239.69px;font-size:11px;line-height:11px;color:#000;letter-spacing:-0.163px;">Custom value list</span>
<span style="left:812.00px;top:239.69px;font-size:11px;line-height:11px;color:#000;letter-spacing:-0.304px;">Use all</span>
<div style="left:986px;top:236px;width:15px;height:16px;background:#f0f0f0;border:1px solid #adadad;"><div style="left:3px;top:3px;width:7px;height:1.500px;background:#444"></div><div style="left:3px;top:6px;width:7px;height:1.500px;background:#444"></div><div style="left:3px;top:9px;width:7px;height:1.500px;background:#444"></div></div>
<div style="left:597px;top:259px;width:404px;height:220px;background:#fff;border:1px solid #7a7f8c;"></div>
<div style="left:597px;top:278px;width:404px;height:1px;background:#7a7f8c;"></div>
<span style="left:600.50px;top:263.19px;font-size:11px;line-height:11px;color:#7d7d7d;letter-spacing:0.079px;">Enter search text</span>
<svg style="left:605px;top:281px;" width="14" height="14" viewBox="0 0 14 14"><rect x="0.500" y="0.500" width="12.500" height="12.500" fill="#fff" stroke="#333"/><path d="M3 7l2.700 2.700 5.300-6" fill="none" stroke="#222" stroke-width="1.300"/></svg>
<span style="left:625.50px;top:283.69px;font-size:11px;line-height:11px;color:#000;letter-spacing:-0.012px;">Option 1</span>
<div style="left:598px;top:487px;width:73px;height:21px;background:#e1e1e1;border:1px solid #adadad;"></div>
<span style="left:629.00px;top:492.69px;font-size:11px;line-height:11px;color:#000;letter-spacing:-0.411px;">All</span>
<div style="left:679px;top:487px;width:73px;height:21px;background:#e1e1e1;border:1px solid #adadad;"></div>
<span style="left:703.00px;top:492.69px;font-size:11px;line-height:11px;color:#000;letter-spacing:-0.324px;">None</span>
<div style="left:941px;top:491px;width:13px;height:13px;background:#fff;border:1px solid #333;"></div>
<span style="left:958.50px;top:493.19px;font-size:11px;line-height:11px;color:#000;letter-spacing:-0.306px;">Exclude</span>
<div style="left:597px;top:527px;width:404px;height:115px;border:1px solid #dcdcdc;"></div>
<div style="left:603px;top:522px;width:49px;height:12px;background:#fff;"></div>
<span style="left:605.50px;top:522.69px;font-size:11px;line-height:11px;color:#000;letter-spacing:-0.438px;">Summary</span>
<span style="left:606.30px;top:546.19px;font-size:11px;line-height:11px;color:#000;letter-spacing:-0.151px;">Field:</span>
<span style="left:661.50px;top:546.19px;font-size:11px;line-height:11px;color:#000;letter-spacing:-0.050px;">[Calculation for Parameter]</span>
<span style="left:606.30px;top:565.19px;font-size:11px;line-height:11px;color:#000;letter-spacing:-0.131px;">Selection:</span>
<span style="left:661.50px;top:565.19px;font-size:11px;line-height:11px;color:#000;letter-spacing:-0.102px;">Selected 1 of 1 values</span>
<span style="left:606.30px;top:584.19px;font-size:11px;line-height:11px;color:#000;letter-spacing:-0.094px;">Wildcard:</span>
<span style="left:661.50px;top:584.19px;font-size:11px;line-height:11px;color:#0000e0;letter-spacing:-0.411px;">All</span>
<span style="left:606.30px;top:603.19px;font-size:11px;line-height:11px;color:#000;letter-spacing:-0.055px;">Condition:</span>
<span style="left:661.50px;top:603.19px;font-size:11px;line-height:11px;color:#0000e0;letter-spacing:-0.324px;">None</span>
<span style="left:606.30px;top:622.19px;font-size:11px;line-height:11px;color:#000;letter-spacing:-0.214px;">Limit:</span>
<span style="left:661.50px;top:622.19px;font-size:11px;line-height:11px;color:#0000e0;letter-spacing:-0.324px;">None</span>
<div style="left:587px;top:663px;width:73px;height:21px;background:#e1e1e1;border:1px solid #adadad;"></div>
<span style="left:609.25px;top:668.69px;font-size:11px;line-height:11px;color:#000;letter-spacing:-0.050px;">Reset</span>
<div style="left:778px;top:663px;width:73px;height:21px;background:#e1e1e1;border:2px solid #0078d7;"></div>
<span style="left:807.50px;top:668.69px;font-size:11px;line-height:11px;color:#000;letter-spacing:-0.953px;">OK</span>
<div style="left:859px;top:663px;width:73px;height:21px;background:#e1e1e1;border:1px solid #adadad;"></div>
<span style="left:879.50px;top:668.69px;font-size:11px;line-height:11px;color:#000;letter-spacing:-0.375px;">Cancel</span>
<div style="left:940px;top:663px;width:73px;height:21px;background:#e1e1e1;border:1px solid #adadad;"></div>
<span style="left:963.00px;top:668.69px;font-size:11px;line-height:11px;color:#000;letter-spacing:-0.106px;">Apply</span>
</body></html>
